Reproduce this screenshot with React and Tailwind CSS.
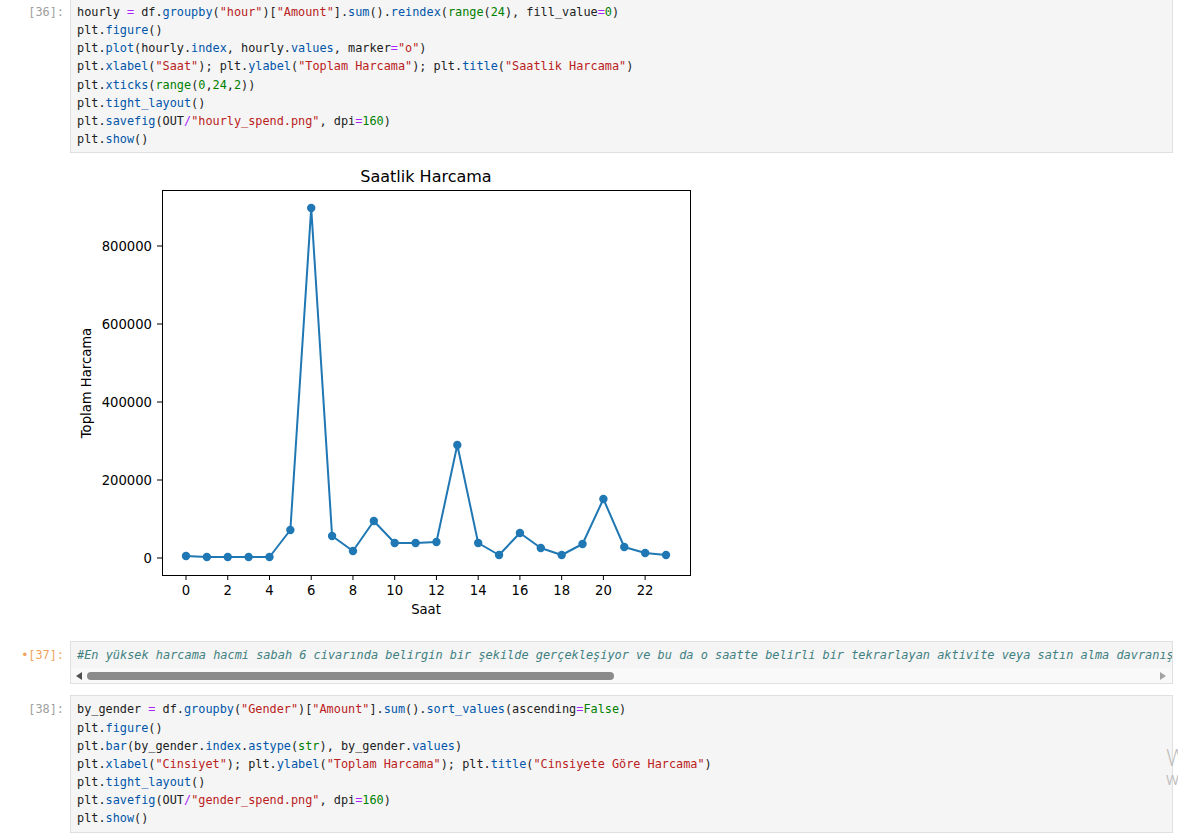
import React from "react";

const C = {
  d: "text-[#212121]",
  p: "text-[#0055aa]",
  s: "text-[#ba2121]",
  n: "text-[#008000]",
  b: "text-[#008000]",
  k: "text-[#008000]",
  o: "text-[#aa22ff]",
};

const cell36 = [
  [["hourly ", "d"], ["=", "o"], [" df.", "d"], ["groupby", "p"], ["(", "d"], ['"hour"', "s"], [")[", "d"], ['"Amount"', "s"], ["].", "d"], ["sum", "p"], ["().", "d"], ["reindex", "p"], ["(", "d"], ["range", "b"], ["(", "d"], ["24", "n"], ["), fill_value", "d"], ["=", "o"], ["0", "n"], [")", "d"]],
  [["plt.", "d"], ["figure", "p"], ["()", "d"]],
  [["plt.", "d"], ["plot", "p"], ["(hourly.", "d"], ["index", "p"], [", hourly.", "d"], ["values", "p"], [", marker", "d"], ["=", "o"], ['"o"', "s"], [")", "d"]],
  [["plt.", "d"], ["xlabel", "p"], ["(", "d"], ['"Saat"', "s"], ["); plt.", "d"], ["ylabel", "p"], ["(", "d"], ['"Toplam Harcama"', "s"], ["); plt.", "d"], ["title", "p"], ["(", "d"], ['"Saatlik Harcama"', "s"], [")", "d"]],
  [["plt.", "d"], ["xticks", "p"], ["(", "d"], ["range", "b"], ["(", "d"], ["0", "n"], [",", "d"], ["24", "n"], [",", "d"], ["2", "n"], ["))", "d"]],
  [["plt.", "d"], ["tight_layout", "p"], ["()", "d"]],
  [["plt.", "d"], ["savefig", "p"], ["(OUT", "d"], ["/", "o"], ['"hourly_spend.png"', "s"], [", dpi", "d"], ["=", "o"], ["160", "n"], [")", "d"]],
  [["plt.", "d"], ["show", "p"], ["()", "d"]],
];

const cell38 = [
  [["by_gender ", "d"], ["=", "o"], [" df.", "d"], ["groupby", "p"], ["(", "d"], ['"Gender"', "s"], [")[", "d"], ['"Amount"', "s"], ["].", "d"], ["sum", "p"], ["().", "d"], ["sort_values", "p"], ["(ascending", "d"], ["=", "o"], ["False", "k"], [")", "d"]],
  [["plt.", "d"], ["figure", "p"], ["()", "d"]],
  [["plt.", "d"], ["bar", "p"], ["(by_gender.", "d"], ["index", "p"], [".", "d"], ["astype", "p"], ["(", "d"], ["str", "b"], ["), by_gender.", "d"], ["values", "p"], [")", "d"]],
  [["plt.", "d"], ["xlabel", "p"], ["(", "d"], ['"Cinsiyet"', "s"], ["); plt.", "d"], ["ylabel", "p"], ["(", "d"], ['"Toplam Harcama"', "s"], ["); plt.", "d"], ["title", "p"], ["(", "d"], ['"Cinsiyete Göre Harcama"', "s"], [")", "d"]],
  [["plt.", "d"], ["tight_layout", "p"], ["()", "d"]],
  [["plt.", "d"], ["savefig", "p"], ["(OUT", "d"], ["/", "o"], ['"gender_spend.png"', "s"], [", dpi", "d"], ["=", "o"], ["160", "n"], [")", "d"]],
  [["plt.", "d"], ["show", "p"], ["()", "d"]],
];

const mono = "font-['DejaVu_Sans_Mono',monospace] text-[11.85px] leading-[18.15px]";
const monoWide = "font-['DejaVu_Sans_Mono',monospace] text-[11.92px] leading-[18.15px]";

const Prompt = ({ children, orange }) => (
  <div className={`w-[64px] shrink-0 text-right pt-[5px] ${mono} ${orange ? "text-[#f0a35a]" : "text-[#9e9e9e]"}`}>
    {children}
  </div>
);

const Code = ({ lines }) => (
  <div className="flex-1 bg-[#f5f5f5] border border-[#e0e0e0] px-[6px] py-[4px] overflow-hidden">
    {lines.map((line, i) => (
      <div key={i} className={`${mono} whitespace-pre`}>
        {line.map(([t, c], j) => (
          <span key={j} className={C[c]}>{t}</span>
        ))}
      </div>
    ))}
  </div>
);

const ys = [556, 557, 557, 557, 557, 530, 208, 536, 551, 521, 543, 543, 542, 445, 543, 555, 533, 548, 555, 544, 499, 547, 553, 555];
const px = (h) => 116 + h * 20.87;

const Chart = () => {
  const pts = ys.map((y, h) => [px(h), y - 160]);
  const yticks = [[0, 398], [200000, 320], [400000, 242], [600000, 164], [800000, 86]];
  const font = { fontFamily: "'DejaVu Sans', sans-serif" };
  return (
    <svg width="630" height="470" viewBox="0 0 630 470" style={font}>
      <rect x="92.5" y="30.5" width="528" height="385" fill="white" stroke="black" strokeWidth="1" />
      {yticks.map(([v, y]) => (
        <g key={v}>
          <line x1="87" y1={y} x2="92" y2={y} stroke="black" strokeWidth="1" />
          <text x="82" y={y} fontSize="13.2" textAnchor="end" dominantBaseline="central" fill="#000">{v}</text>
        </g>
      ))}
      {[0, 2, 4, 6, 8, 10, 12, 14, 16, 18, 20, 22].map((h) => (
        <g key={h}>
          <line x1={px(h)} y1="415" x2={px(h)} y2="420" stroke="black" strokeWidth="1" />
          <text x={px(h)} y="430" fontSize="13.2" textAnchor="middle" dominantBaseline="central" fill="#000">{h}</text>
        </g>
      ))}
      <polyline points={pts.map((p) => p.join(",")).join(" ")} fill="none" stroke="#1f77b4" strokeWidth="2" strokeLinejoin="round" />
      {pts.map(([x, y], i) => (
        <circle key={i} cx={x} cy={y} r="4.2" fill="#1f77b4" />
      ))}
      <text x="356" y="16" fontSize="16" textAnchor="middle" dominantBaseline="central" fill="#000">Saatlik Harcama</text>
      <text x="356" y="449" fontSize="13.2" textAnchor="middle" dominantBaseline="central" fill="#000">Saat</text>
      <text x="16" y="223" fontSize="13.2" textAnchor="middle" dominantBaseline="central" fill="#000" transform="rotate(-90 16 223)">Toplam Harcama</text>
    </svg>
  );
};

const comment = "#En yüksek harcama hacmi sabah 6 civarında belirgin bir şekilde gerçekleşiyor ve bu da o saatte belirli bir tekrarlayan aktivite veya satın alma davranışını gösteriyor.";

export default function App() {
  return (
    <div className="relative w-[1178px] h-[838px] overflow-hidden bg-white">
      <div className="flex flex-col pr-[5px]">
        <div className="flex gap-[6px] mt-[-2px]">
          <Prompt>[36]:</Prompt>
          <Code lines={cell36} />
        </div>

        <div className="flex gap-[6px] mt-[7px]">
          <div className="w-[64px] shrink-0" />
          <Chart />
        </div>

        <div className="flex gap-[6px] mt-[11px]">
          <Prompt orange>•[37]:</Prompt>
          <div className="flex-1 min-w-0 bg-[#f5f5f5] border border-[#e0e0e0] overflow-hidden">
            <div className="px-[6px] pt-[4px] pb-[4px]">
              <div className={`${monoWide} whitespace-pre italic text-[#408080]`}>{comment}</div>
            </div>
            <div className="h-[15px] bg-[#f9f9f9] flex items-center px-[5px] gap-[5px]">
              <div className="w-0 h-0 border-y-[4px] border-y-transparent border-r-[6px] border-r-[#505050]" />
              <div className="w-[527px] h-[8px] rounded-full bg-[#8b8b8b]" />
              <div className="flex-1" />
              <div className="w-0 h-0 border-y-[4px] border-y-transparent border-l-[6px] border-l-[#a3a3a3] mr-[1px]" />
            </div>
          </div>
        </div>

        <div className="flex gap-[6px] mt-[11px]">
          <Prompt>[38]:</Prompt>
          <Code lines={cell38} />
        </div>
      </div>

      <div className="absolute left-[1166px] top-[743px] whitespace-nowrap text-[#bdbdbd] font-['Open_Sans',sans-serif] pointer-events-none">
        <div className="text-[24px] leading-[28px] font-light">Windows'u Etkinleştir</div>
        <div className="text-[14px] leading-[18px]">Windows'u etkinleştirmek için Ayarlar'a gidin.</div>
      </div>
    </div>
  );
}
